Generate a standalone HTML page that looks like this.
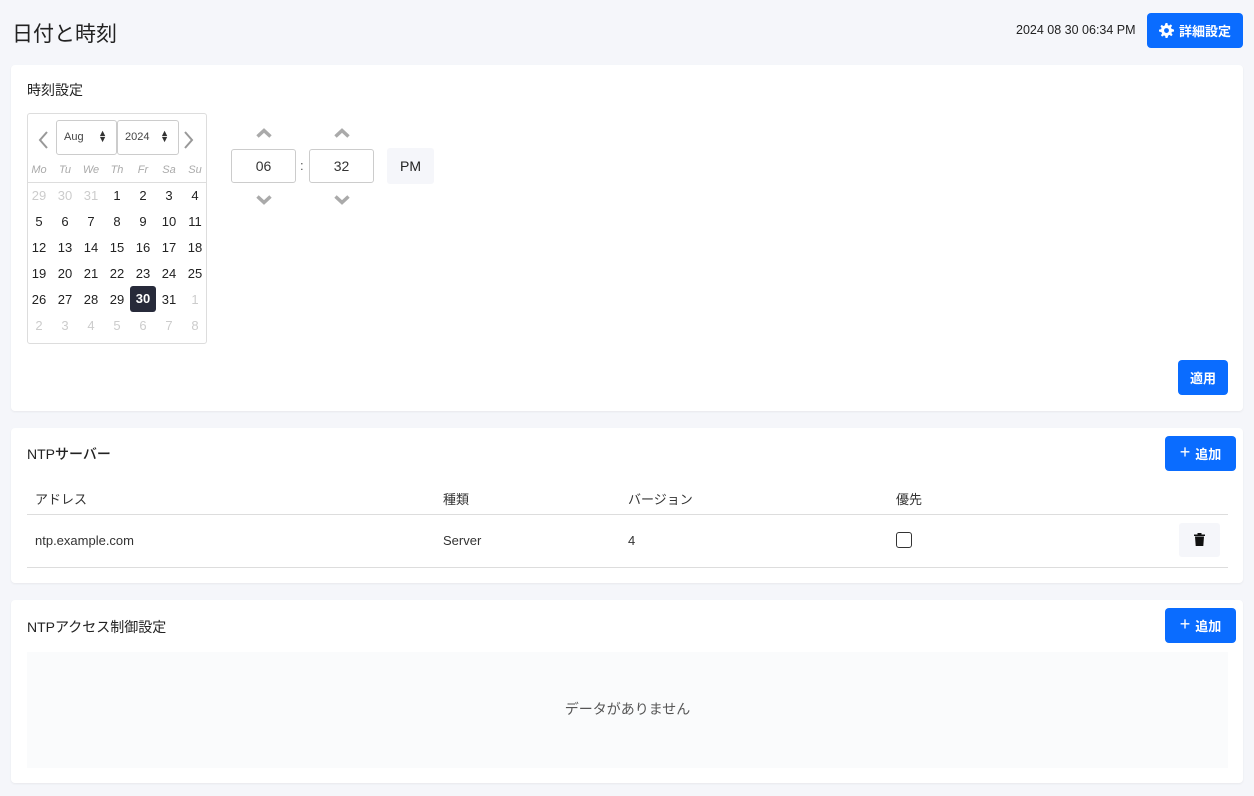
<!DOCTYPE html>
<html><head><meta charset="utf-8"><style>
*{box-sizing:border-box;margin:0;padding:0}
body{width:1254px;height:796px;background:#f5f6fa;font-family:"Liberation Sans","Noto Sans CJK JP",sans-serif;color:#222;position:relative;overflow:hidden;font-size:13px}
.abs{position:absolute}
.card{position:absolute;left:11px;width:1232px;background:#fff;border-radius:4px;box-shadow:0 1px 2px rgba(0,0,0,.06)}
.btn{position:absolute;background:#0a6cff;color:#fff;border-radius:4px;font-size:13px;font-weight:bold;display:flex;align-items:center;justify-content:center;gap:5px}
.ct{position:absolute;font-size:14px;color:#222}
.cal{position:absolute;left:27px;top:113px;width:180px;height:231px;border:1px solid #ddd;border-radius:3px}
.cell{position:absolute;width:26px;text-align:center;font-size:13px}
.sel{position:absolute;top:6px;height:35px;border:1px solid #ccc;border-radius:3px;font-size:11px;color:#444;padding:10px 0 0 7px}
.inp{position:absolute;top:149px;width:65px;height:34px;border:1px solid #ccc;border-radius:3px;text-align:center;line-height:32px;font-size:14px;color:#333}
.chev{position:absolute}
</style></head><body>
<div class="abs" style="left:12px;top:18px;font-size:21px;color:#222">日付と時刻</div>
<div class="abs" style="left:1016px;top:23px;font-size:12.5px;color:#222">2024 08 30 06:34 PM</div>
<div class="btn" style="left:1147px;top:13px;width:96px;height:35px"><svg width="15" height="15" viewBox="0 0 16 16"><path fill="#fff" d="M7 0h2l.4 2.2 1.3.6 1.9-1.3 1.4 1.4-1.3 1.9.6 1.3L16 7v2l-2.2.4-.6 1.3 1.3 1.9-1.4 1.4-1.9-1.3-1.3.6L9 16H7l-.4-2.2-1.3-.6-1.9 1.3-1.4-1.4 1.3-1.9-.6-1.3L0 9V7l2.2-.4.6-1.3-1.3-1.9 1.4-1.4 1.9 1.3 1.3-.6z"/><circle cx="8" cy="8" r="2.6" fill="#0a6cff"/></svg>詳細設定</div>

<div class="card" style="top:65px;height:346px"></div>
<div class="ct" style="left:27px;top:80px">時刻設定</div>
<div class="cal">
 <svg class="abs" style="left:9px;top:17px" width="12" height="18" viewBox="0 0 12 18"><path d="M10 1 3 9l7 8" stroke="#999" stroke-width="2" fill="none"/></svg>
 <svg class="abs" style="left:155px;top:17px" width="12" height="18" viewBox="0 0 12 18"><path d="M2 1l7 8-7 8" stroke="#999" stroke-width="2" fill="none"/></svg>
 <div class="sel" style="left:28px;width:61px">Aug<span class="abs" style="right:9px;top:9px;font-size:9px;line-height:6px;color:#333">▲<br>▼</span></div>
 <div class="sel" style="left:89px;width:62px">2024<span class="abs" style="right:9px;top:9px;font-size:9px;line-height:6px;color:#333">▲<br>▼</span></div>
 <div class="abs" style="left:0;top:68px;width:178px;border-top:1px solid #ddd"></div>
</div>
<div id="days"></div>
<div class="chev" style="left:256px;top:126px"><svg width="16" height="10"><path d="M1.5 8.5l6.5-6 6.5 6" stroke="#aaa" stroke-width="3.5" fill="none"/></svg></div>
<div class="chev" style="left:334px;top:126px"><svg width="16" height="10"><path d="M1.5 8.5l6.5-6 6.5 6" stroke="#aaa" stroke-width="3.5" fill="none"/></svg></div>
<div class="chev" style="left:256px;top:193px"><svg width="16" height="10"><path d="M1.5 1.5l6.5 6 6.5-6" stroke="#aaa" stroke-width="3.5" fill="none"/></svg></div>
<div class="chev" style="left:334px;top:193px"><svg width="16" height="10"><path d="M1.5 1.5l6.5 6 6.5-6" stroke="#aaa" stroke-width="3.5" fill="none"/></svg></div>
<div class="inp" style="left:231px">06</div>
<div class="abs" style="left:300px;top:158px;color:#555">:</div>
<div class="inp" style="left:309px">32</div>
<div class="abs" style="left:387px;top:148px;width:47px;height:36px;background:#f5f6fa;border-radius:3px;text-align:center;line-height:36px;font-size:14px">PM</div>
<div class="btn" style="left:1178px;top:360px;width:50px;height:35px">適用</div>

<div class="card" style="top:428px;height:155px"></div>
<div class="ct" style="left:27px;top:444px;font-weight:500">NTPサーバー</div>
<div class="btn" style="left:1165px;top:436px;width:71px;height:35px"><span style="font-size:18px;font-weight:normal;margin-top:-2px">+</span>追加</div>
<div class="abs" style="left:35px;top:489px;color:#333">アドレス</div>
<div class="abs" style="left:443px;top:489px;color:#333">種類</div>
<div class="abs" style="left:628px;top:489px;color:#333">バージョン</div>
<div class="abs" style="left:896px;top:489px;color:#333">優先</div>
<div class="abs" style="left:27px;top:514px;width:1201px;border-top:1px solid #ddd"></div>
<div class="abs" style="left:35px;top:533px;color:#333">ntp.example.com</div>
<div class="abs" style="left:443px;top:533px;color:#333">Server</div>
<div class="abs" style="left:628px;top:533px;color:#333">4</div>
<div class="abs" style="left:896px;top:532px;width:16px;height:16px;border:1.5px solid #333;border-radius:3px"></div>
<div class="abs" style="left:1179px;top:523px;width:41px;height:34px;background:#f5f6fa;border-radius:3px"><svg class="abs" style="left:15px;top:10px" width="11" height="13" viewBox="0 0 11 13"><path d="M0 1.5h11v1.5H0zM3.5 0h4v1.5h-4zM1 3.5h9l-.7 9.5H1.7z" fill="#111"/></svg></div>
<div class="abs" style="left:27px;top:567px;width:1201px;border-top:1px solid #ddd"></div>

<div class="card" style="top:600px;height:183px"></div>
<div class="ct" style="left:27px;top:617px">NTPアクセス制御設定</div>
<div class="btn" style="left:1165px;top:608px;width:71px;height:35px"><span style="font-size:18px;font-weight:normal;margin-top:-2px">+</span>追加</div>
<div class="abs" style="left:27px;top:652px;width:1201px;height:116px;background:#fafbfc;text-align:center;line-height:114px;font-size:14px;color:#555">データがありません</div>
<script>
var h='',wd=['Mo','Tu','We','Th','Fr','Sa','Su'];
for(var i=0;i<7;i++)h+='<div class="cell" style="left:'+(26+i*26)+'px;top:164px;font-size:11px;font-style:italic;color:#aaa">'+wd[i]+'</div>';
var d=[29,30,31];for(var i=1;i<=31;i++)d.push(i);for(var i=1;i<=8;i++)d.push(i);
for(var k=0;k<42;k++){var r=Math.floor(k/7),c=k%7,g=(k<3||k>=34),s=(k==32);
h+='<div class="cell" style="left:'+(26+c*26)+'px;top:'+(r==4&&s?286:188+r*26)+'px;'+(s?'height:26px;line-height:26px;background:#272a3a;color:#fff;font-weight:bold;border-radius:3px;':'')+'color:'+(s?'#fff':g?'#ccc':'#222')+'">'+d[k]+'</div>';}
document.getElementById('days').innerHTML=h;
</script>
</body></html>
